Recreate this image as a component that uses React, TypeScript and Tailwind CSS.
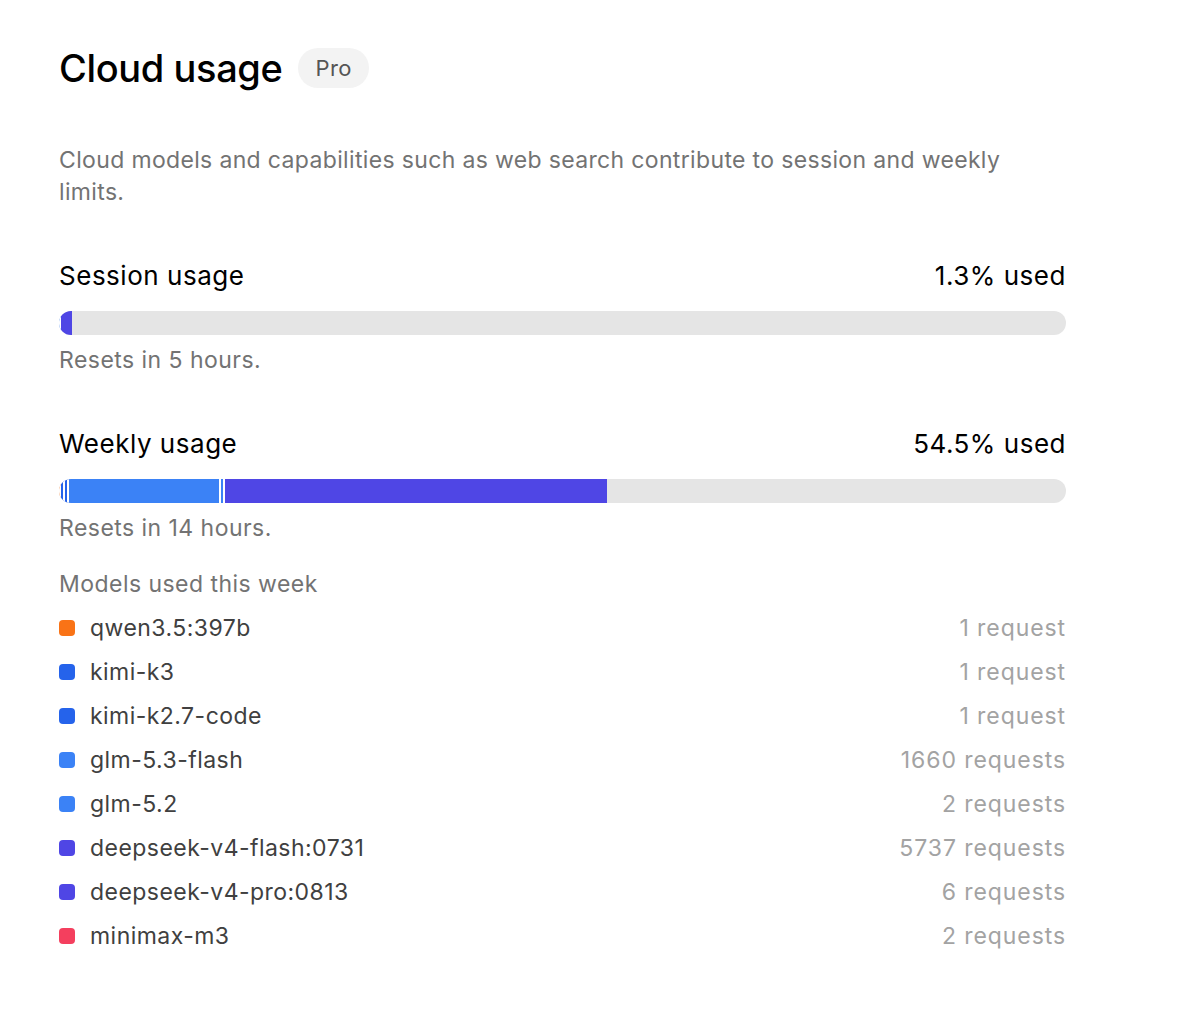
import React from 'react';

type Segment = { color: string; width: number };

type ModelRow = { name: string; color: string; requests: number };

const sessionSegments: Segment[] = [
    { color: 'bg-[#3b82f6]', width: 2 },
    { color: 'bg-[#4f46e5]', width: 11 },
];

// widths in px include the 2px white divider in front of each segment
const weeklySegments: Segment[] = [
    { color: 'bg-[#f97316]', width: 2 },
    { color: 'bg-[#2563eb]', width: 4 },
    { color: 'bg-[#2563eb]', width: 4 },
    { color: 'bg-[#3b82f6]', width: 152 },
    { color: 'bg-[#3b82f6]', width: 4 },
    { color: 'bg-[#4f46e5]', width: 382 },
];

const models: ModelRow[] = [
    { name: 'qwen3.5:397b', color: 'bg-[#f97316]', requests: 1 },
    { name: 'kimi-k3', color: 'bg-[#2563eb]', requests: 1 },
    { name: 'kimi-k2.7-code', color: 'bg-[#2563eb]', requests: 1 },
    { name: 'glm-5.3-flash', color: 'bg-[#3b82f6]', requests: 1660 },
    { name: 'glm-5.2', color: 'bg-[#3b82f6]', requests: 2 },
    { name: 'deepseek-v4-flash:0731', color: 'bg-[#4f46e5]', requests: 5737 },
    { name: 'deepseek-v4-pro:0813', color: 'bg-[#4f46e5]', requests: 6 },
    { name: 'minimax-m3', color: 'bg-[#f43f5e]', requests: 2 },
];

const UsageBar = ({ segments }: { segments: Segment[] }) => (
    <div className="mt-[19px] h-6 w-full rounded-full bg-[#e5e5e5] overflow-hidden flex divide-x-2 divide-white">
        {segments.map((seg, i) => (
            <div key={i} className={`h-full shrink-0 ${seg.color}`} style={{ width: seg.width }} />
        ))}
    </div>
);

const UsageBlock = ({ label, used, resets, segments }: { label: string; used: string; resets: string; segments: Segment[] }) => (
    <div>
        <div className="flex items-center justify-between text-[26px] leading-8 tracking-[0.02em] text-black">
            <span>{label}</span>
            <span>{used}</span>
        </div>
        <UsageBar segments={segments} />
        <p className="mt-[9px] text-[23px] leading-8 tracking-[0.02em] text-[#737373]">{resets}</p>
    </div>
);

export default function App() {
    return (
        <div className="min-h-screen bg-white font-['Inter',sans-serif] antialiased">
            <div className="ml-[59px] w-[1007px] pt-[45px] pb-16">
                {/* header */}
                <div className="flex items-center gap-4">
                    <h1 className="text-[38px] leading-[46px] font-medium tracking-[-0.01em] text-black">Cloud usage</h1>
                    <span className="h-10 px-[17px] rounded-full bg-[#f3f3f3] text-[22px] leading-10 tracking-[0.02em] text-[#555]">Pro</span>
                </div>

                <p className="mt-[53px] text-[23px] leading-8 tracking-[0.015em] text-[#737373]">
                    Cloud models and capabilities such as web search contribute to session and weekly limits.
                </p>

                <div className="mt-[52px]">
                    <UsageBlock label="Session usage" used="1.3% used" resets="Resets in 5 hours." segments={sessionSegments} />
                </div>

                <div className="mt-[52px]">
                    <UsageBlock label="Weekly usage" used="54.5% used" resets="Resets in 14 hours." segments={weeklySegments} />
                </div>

                {/* per-model breakdown */}
                <p className="mt-6 text-[23px] leading-8 tracking-[0.02em] text-[#737373]">Models used this week</p>
                <ul className="mt-[6px]">
                    {models.map((m) => (
                        <li key={m.name} className="h-11 flex items-center justify-between text-[23px] tracking-[0.02em]">
                            <div className="flex items-center gap-[15px]">
                                <span className={`w-4 h-4 rounded-[4px] ${m.color}`} />
                                <span className="text-[#404040]">{m.name}</span>
                            </div>
                            <span className="text-[#a3a3a3] tracking-[0.04em]">
                                {m.requests} {m.requests === 1 ? 'request' : 'requests'}
                            </span>
                        </li>
                    ))}
                </ul>
            </div>
        </div>
    );
}
